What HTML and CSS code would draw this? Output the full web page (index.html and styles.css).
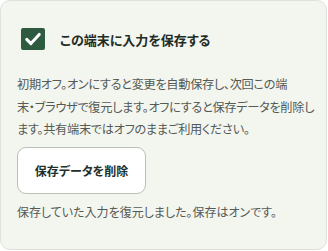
FILE: index.html
```html
<!DOCTYPE html>
<html lang="ja">
<head>
<meta charset="utf-8">
<link rel="stylesheet" href="styles.css">
</head>
<body>
<section class="card">
  <label class="toggle">
    <span class="box">
      <svg viewBox="0 0 24 24" width="20" height="20"><path d="M4.5 12.5l5 5L19.5 6.5" fill="none" stroke="#fff" stroke-width="3.6" stroke-linecap="round" stroke-linejoin="round"/></svg>
    </span>
    <span class="label-text">この端末に入力を保存する</span>
  </label>
  <p class="desc">初期オフ。オンにすると変更を自動保存し、次回この端<br>末・ブラウザで復元します。オフにすると保存データを削除し<br>ます。共有端末ではオフのままご利用ください。</p>
  <button class="btn" type="button">保存データを削除</button>
  <p class="status">保存していた入力を復元しました。保存はオンです。</p>
</section>
</body>
</html>
```
FILE: styles.css
```css
html, body {
  margin: 0;
  padding: 0;
  background: #ffffff;
}
body {
  font-family: "Noto Sans CJK JP", "Noto Sans", sans-serif;
  font-feature-settings: "palt";
}
.card {
  box-sizing: border-box;
  width: 327px;
  height: 250px;
  background: #f3f5ef;
  border: 1px solid #dde2da;
  border-radius: 10px;
  padding: 15px 16px 16px 16px;
  display: flex;
  flex-direction: column;
  align-items: flex-start;
}
.toggle {
  display: flex;
  align-items: center;
  gap: 15px;
  padding: 12px 4px 12px 4px;
}
.box {
  width: 24px;
  height: 22px;
  background: #2e5a3f;
  border-radius: 2px;
  display: flex;
  align-items: center;
  justify-content: center;
}
.box svg { display: block; }
.label-text {
  font-size: 13px;
  font-weight: 700;
  color: #1f2b25;
}
.desc {
  margin: 11px 0 0 0;
  font-size: 12.2px;
  letter-spacing: -0.3px;
  line-height: 22.5px;
  white-space: nowrap;
  color: #545a55;
}
.btn {
  margin-top: 6px;
  width: 129px;
  height: 47px;
  background: #ffffff;
  border: 1px solid #b9c2b7;
  border-radius: 9px;
  font-family: inherit;
  font-feature-settings: "palt";
  font-size: 12px;
  font-weight: 700;
  color: #22302a;
  padding: 0;
}
.status {
  margin: 7px 0 0 0;
  font-size: 12px;
  line-height: 22.5px;
  color: #545a55;
}
```
